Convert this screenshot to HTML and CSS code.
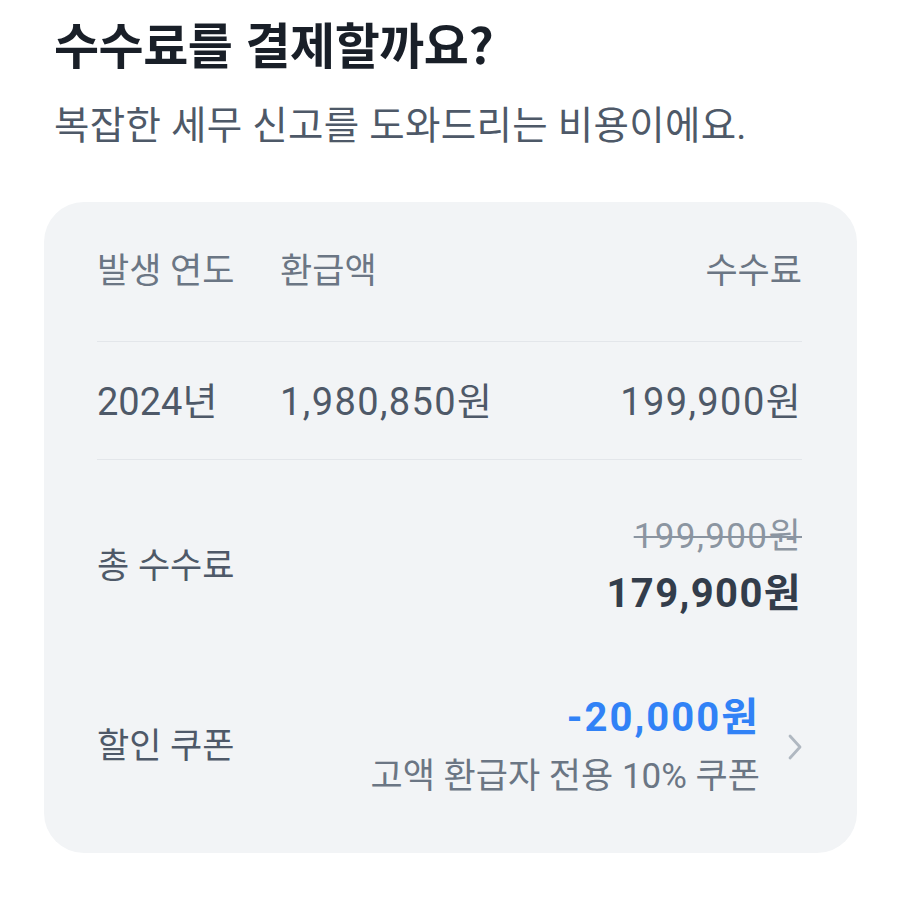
FILE: index.html
```html
<!DOCTYPE html>
<html lang="ko">
<head>
<meta charset="utf-8">
<link rel="stylesheet" href="styles.css">
</head>
<body>
<main class="page">
  <h1 class="title">수수료를 결제할까요?</h1>
  <p class="subtitle">복잡한 세무 신고를 도와드리는 비용이에요.</p>

  <section class="card">
    <div class="table">
      <div class="row head">
        <span class="c1">발생 연도</span>
        <span class="c2">환급액</span>
        <span class="c3">수수료</span>
      </div>
      <div class="row body">
        <span class="c1 num">2024년</span>
        <span class="c2 num">1,980,850원</span>
        <span class="c3 num">199,900원</span>
      </div>
    </div>

    <div class="sum">
      <span class="label">총 수수료</span>
      <div class="stack">
        <span class="strike">199,900원</span>
        <span class="total">179,900원</span>
      </div>
    </div>

    <div class="coupon">
      <span class="label">할인 쿠폰</span>
      <div class="coupon-right">
        <div class="stack">
          <span class="discount">-20,000원</span>
          <span class="coupon-name">고액 환급자 전용 10% 쿠폰</span>
        </div>
        <svg class="chev" width="14" height="26" viewBox="0 0 14 26" aria-hidden="true">
          <path d="M2 2 L12 13 L2 24" fill="none" stroke="#b0b8c1" stroke-width="2.8" stroke-linecap="round" stroke-linejoin="round"/>
        </svg>
      </div>
    </div>
  </section>
</main>
</body>
</html>
```

FILE: styles.css
```css
* { box-sizing: border-box; }
html, body {
  margin: 0;
  padding: 0;
  background: #ffffff;
}
body {
  font-family: Roboto, "Noto Sans CJK KR", "Noto Sans", sans-serif;
  color: #191f28;
}
.page {
  padding: 13px 43px 0 54px;
}
.title {
  margin: 0;
  font-family: "Noto Sans CJK KR", sans-serif;
  font-size: 49px;
  line-height: 60px;
  font-weight: 700;
  color: #191f28;
  letter-spacing: -0.5px;
}
.subtitle {
  margin: 28px 0 0;
  font-size: 38.5px;
  line-height: 50px;
  font-weight: 400;
  color: #4e5968;
  letter-spacing: 0.3px;
}
.card {
  margin: 51px 0 0 -10px;
  background: #f2f4f6;
  border-radius: 40px;
  padding: 45px 55px 56px 53px;
}
.row {
  display: grid;
  grid-template-columns: 183px 1fr auto;
  font-size: 35px;
  line-height: 50px;
}
.row.head {
  color: #6b7684;
  padding-bottom: 44px;
  border-bottom: 1px solid #e3e6ea;
}
.row.body {
  color: #4e5968;
  padding: 35px 0 32px;
  border-bottom: 1px solid #e3e6ea;
}
.num {
  font-size: 38px;
  letter-spacing: 1.4px;
}
.c1.num { letter-spacing: 0; }
.c3 { text-align: right; }

.sum, .coupon {
  display: flex;
  justify-content: space-between;
  align-items: center;
}
.sum { padding-top: 57px; }
.coupon { padding-top: 80px; }
.label {
  font-size: 35px;
  line-height: 50px;
  color: #4e5968;
}
.stack {
  display: flex;
  flex-direction: column;
  align-items: flex-end;
}
.strike {
  font-size: 35px;
  line-height: 40px;
  color: #8b95a1;
  letter-spacing: 1.4px;
  text-decoration: line-through;
  text-decoration-thickness: 2px;
}
.total {
  margin-top: 15px;
  font-size: 40px;
  line-height: 44px;
  font-weight: 700;
  letter-spacing: 1.4px;
  color: #333d4b;
}
.coupon-right {
  display: flex;
  align-items: center;
  gap: 28px;
}
.discount {
  font-size: 40px;
  line-height: 44px;
  font-weight: 700;
  letter-spacing: 2px;
  color: #3182f6;
}
.coupon-name {
  margin-top: 17px;
  font-size: 35px;
  line-height: 40px;
  color: #6b7684;
}
.chev { display: block; }
```
